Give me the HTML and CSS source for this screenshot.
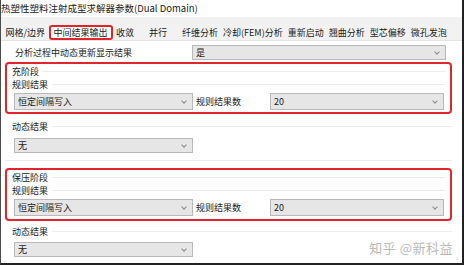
FILE: index.html
```html
<!DOCTYPE html>
<html>

<head>
    <title>热塑性塑料注射成型求解器参数</title>
    <link rel="stylesheet" href="styles.css">
</head>

<body>

    <div class="window">

        <div class="title">热塑性塑料注射成型求解器参数(Dual Domain)</div>

        <div class="tabs">
            <span class="tab first">网格/边界</span>
            <span class="tab active">中间结果输出</span>
            <span class="tab short">收敛</span>
            <span class="tab short">并行</span>
            <span class="tab">纤维分析</span>
            <span class="tab">冷却(FEM)分析</span>
            <span class="tab">重新启动</span>
            <span class="tab">翘曲分析</span>
            <span class="tab">型芯偏移</span>
            <span class="tab">微孔发泡</span>
        </div>

        <div class="page">

            <div class="top-row">
                <span class="top-label">分析过程中动态更新显示结果</span>
                <div class="select top-select">是</div>
            </div>

            <div class="group">
                <div class="mark">
                    <div class="caption">充阶段</div>
                    <div class="caption">规则结果</div>
                    <div class="select-row">
                        <div class="select half">恒定间隔写入</div>
                        <span class="count-label">规则结果数</span>
                        <div class="select count">20</div>
                    </div>
                </div>
                <div class="caption dynamic">动态结果</div>
                <div class="select half dynamic-select">无</div>
            </div>

            <div class="group last">
                <div class="mark second">
                    <div class="caption">保压阶段</div>
                    <div class="caption">规则结果</div>
                    <div class="select-row">
                        <div class="select half">恒定间隔写入</div>
                        <span class="count-label">规则结果数</span>
                        <div class="select count">20</div>
                    </div>
                </div>
                <div class="caption dynamic">动态结果</div>
                <div class="select half dynamic-select">无</div>
            </div>

        </div>

        <div class="watermark">知乎 @新科益</div>

    </div>

</body>

</html>
```

FILE: styles.css
```css
body {
    margin: 0;
    font-family: "Noto Sans CJK SC", sans-serif;
    font-size: 9px;
    color: #1a1a1a;
    background: #ffffff;
}

.window {
    position: relative;
    width: 464px;
    height: 265px;
    box-sizing: border-box;
    border-left: 1px solid #4a4a4a;
    border-right: 2px solid #222222;
    border-bottom: 2px solid #222222;
    overflow: hidden;
}

.title {
    height: 17px;
    line-height: 16px;
    font-size: 9.5px;
    white-space: nowrap;
    background: #ffffff;
}

/* tab strip */

.tabs {
    display: flex;
    align-items: flex-end;
    height: 24px;
    background: #f2f2f2;
    border-bottom: 1px solid #e4e4e4;
    box-sizing: border-box;
    white-space: nowrap;
}

.tab {
    line-height: 11px;
    padding: 2px 2.5px;
}

.tab.first {
    margin-left: 2px;
}

.tab.short {
    min-width: 28px;
}

.tab.active {
    background: #ffffff;
    border: 2px solid #e0262a;
    border-radius: 3px;
    padding: 0 3px;
    margin: 0 1px;
}

/* content */

.page {
    padding: 3px 10px 0 4px;
}

.top-row {
    display: flex;
    align-items: center;
    height: 16px;
}

.top-label {
    width: 177px;
    padding-left: 10px;
}

.top-select {
    flex: 1;
    margin-right: 6px;
}

.group {
    padding-bottom: 7px;
    border-bottom: 1px solid #ebebeb;
}

.group.last {
    border-bottom: none;
}

.mark {
    margin-top: 2px;
    border: 2px solid #e0262a;
    border-radius: 4px;
    padding: 1px 5px 2px;
}

.mark.second {
    margin-top: 7px;
    padding-bottom: 3px;
}

.caption {
    display: flex;
    align-items: center;
    line-height: 13px;
}

.caption::after {
    content: "";
    flex: 1;
    height: 1px;
    margin-left: 4px;
    background: #ececec;
}

.caption.dynamic {
    margin-top: 6px;
    padding-left: 7px;
}

.group.last .caption.dynamic {
    margin-top: 4px;
}

.select-row {
    display: flex;
    align-items: center;
    margin-top: 2px;
}

.select {
    position: relative;
    height: 15px;
    line-height: 14px;
    box-sizing: border-box;
    padding-left: 3px;
    background: #e6e6e6;
    border: 1px solid #b9b9b9;
}

.select::after {
    content: "";
    position: absolute;
    right: 6px;
    top: 4px;
    width: 3px;
    height: 3px;
    border-right: 1px solid #8a8a8a;
    border-bottom: 1px solid #8a8a8a;
    transform: rotate(45deg);
}

.select.half {
    width: 179px;
    height: 17px;
    line-height: 16px;
    margin-left: 2px;
}

.select.half::after,
.select.count::after {
    top: 5px;
}

.count-label {
    width: 77px;
    padding-left: 3px;
    box-sizing: border-box;
}

.select.count {
    width: 174px;
    height: 17px;
    line-height: 16px;
}

.select.dynamic-select {
    height: 15px;
    line-height: 14px;
    margin-top: 5px;
    margin-left: 9px;
}

.group.last .select.dynamic-select {
    margin-top: 4px;
}

.select.dynamic-select::after {
    top: 4px;
}

.watermark {
    position: absolute;
    right: 9px;
    top: 238px;
    font-size: 13px;
    color: #b9b9b9;
    letter-spacing: 0.5px;
}
```
